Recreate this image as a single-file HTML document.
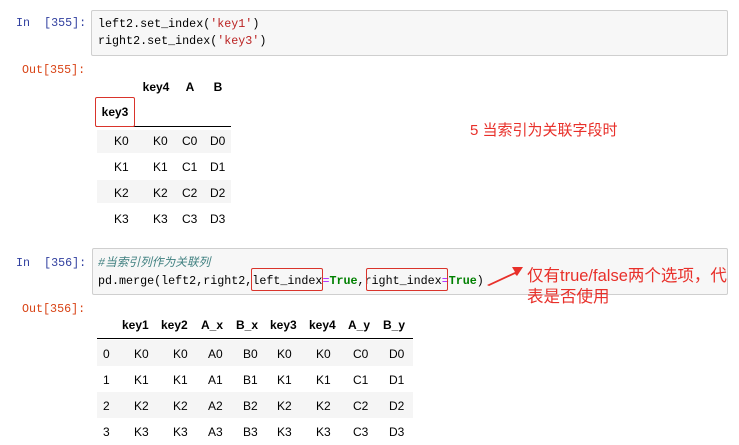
<!DOCTYPE html>
<html><head><meta charset="utf-8"><style>
body{margin:0;width:739px;height:439px;background:#fff;position:relative;overflow:hidden;font-family:"Liberation Sans","Noto Sans CJK SC",sans-serif}
.a{position:absolute;white-space:pre}
.mono{font-family:"Liberation Mono","Noto Sans CJK SC",monospace;font-size:11.7px}
.pin{color:#303f9f}
.pout{color:#d84315}
.cell{position:absolute;background:#f7f7f7;border:1px solid #cfcfcf;border-radius:2px}
.s{color:#ba2121}
.k{color:#008000;font-weight:bold}
.o{color:#aa22ff}
.c{color:#408080;font-style:italic}
.rb{position:absolute;border:1px solid #d9342b;border-radius:2px}
.red{color:#e8302a;font-size:15px}
.t{position:absolute;font-size:12px;color:#000;text-align:center}
.row{position:absolute;background:#f5f5f5}
</style></head><body>
<div class="a mono pin" style="left:16px;top:16px">In  [355]:</div>
<div class="cell" style="left:91px;top:10px;width:635px;height:44px"></div>
<div class="a mono" style="left:98px;top:16px;line-height:17px">left2.set_index(<span class="s">'key1'</span>)
right2.set_index(<span class="s">'key3'</span>)</div>
<div class="a mono pout" style="left:22px;top:63px">Out[355]:</div>

<div class="row" style="left:97px;top:130px;width:134px;height:23px"></div>
<div class="row" style="left:97px;top:180px;width:134px;height:23px"></div>
<div style="position:absolute;left:96px;top:126px;width:135px;height:1px;background:#000"></div>
<div class="rb" style="left:95px;top:97px;width:38px;height:28px"></div>
<div class="t" style="left:100px;top:105px;font-weight:bold;width:30px">key3</div>
<div class="t" style="left:140px;top:80px;font-weight:bold;width:32px">key4</div>
<div class="t" style="left:182px;top:80px;font-weight:bold;width:16px">A</div>
<div class="t" style="left:210px;top:80px;font-weight:bold;width:16px">B</div>
<div class="a" style="left:114px;top:128px;font-size:12px;line-height:26px">K0
K1
K2
K3</div>
<div class="a" style="left:153px;top:128px;font-size:12px;line-height:26px">K0
K1
K2
K3</div>
<div class="a" style="left:182px;top:128px;font-size:12px;line-height:26px">C0
C1
C2
C3</div>
<div class="a" style="left:210px;top:128px;font-size:12px;line-height:26px">D0
D1
D2
D3</div>
<div class="a red" style="left:470px;top:119px">5 当索引为关联字段时</div>

<div class="a mono pin" style="left:16px;top:256px">In  [356]:</div>
<div class="cell" style="left:92px;top:248px;width:634px;height:45px"></div>
<div class="a mono" style="left:98px;top:254px;line-height:18px"><span class="c">#当索引列作为关联列</span>
pd.merge(left2,right2,left_index<span class="o">=</span><span class="k">True</span>,right_index<span class="o">=</span><span class="k">True</span>)</div>
<div class="rb" style="left:251px;top:268px;width:70px;height:21px"></div>
<div class="rb" style="left:366px;top:268px;width:80px;height:21px"></div>
<svg style="position:absolute;left:485px;top:262px" width="40" height="26"><path d="M2 23 L30 10 L27 5 L38 5 L32 14 L30 12 L4 24Z" fill="#e8302a"/></svg>
<div class="a red" style="left:527px;top:266px;line-height:21px;font-size:16.5px">仅有true/false两个选项，代
表是否使用</div>
<div class="a mono pout" style="left:22px;top:302px">Out[356]:</div>

<div class="row" style="left:97px;top:340px;width:316px;height:26px"></div>
<div class="row" style="left:97px;top:392px;width:316px;height:26px"></div>
<div style="position:absolute;left:97px;top:338px;width:316px;height:1px;background:#000"></div>
<div class="a" style="left:97px;top:318px;font-size:12px;font-weight:bold;word-spacing:0">      <span style="position:absolute;left:25px">key1</span><span style="position:absolute;left:64px">key2</span><span style="position:absolute;left:104px">A_x</span><span style="position:absolute;left:139px">B_x</span><span style="position:absolute;left:173px">key3</span><span style="position:absolute;left:212px">key4</span><span style="position:absolute;left:251px">A_y</span><span style="position:absolute;left:286px">B_y</span></div>
<div class="a" style="left:103px;top:341px;font-size:12px;line-height:26px">0
1
2
3</div>
<div class="a" style="left:134px;top:341px;font-size:12px;line-height:26px">K0
K1
K2
K3</div>
<div class="a" style="left:173px;top:341px;font-size:12px;line-height:26px">K0
K1
K2
K3</div>
<div class="a" style="left:208px;top:341px;font-size:12px;line-height:26px">A0
A1
A2
A3</div>
<div class="a" style="left:243px;top:341px;font-size:12px;line-height:26px">B0
B1
B2
B3</div>
<div class="a" style="left:277px;top:341px;font-size:12px;line-height:26px">K0
K1
K2
K3</div>
<div class="a" style="left:316px;top:341px;font-size:12px;line-height:26px">K0
K1
K2
K3</div>
<div class="a" style="left:353px;top:341px;font-size:12px;line-height:26px">C0
C1
C2
C3</div>
<div class="a" style="left:389px;top:341px;font-size:12px;line-height:26px">D0
D1
D2
D3</div>
</body></html>
